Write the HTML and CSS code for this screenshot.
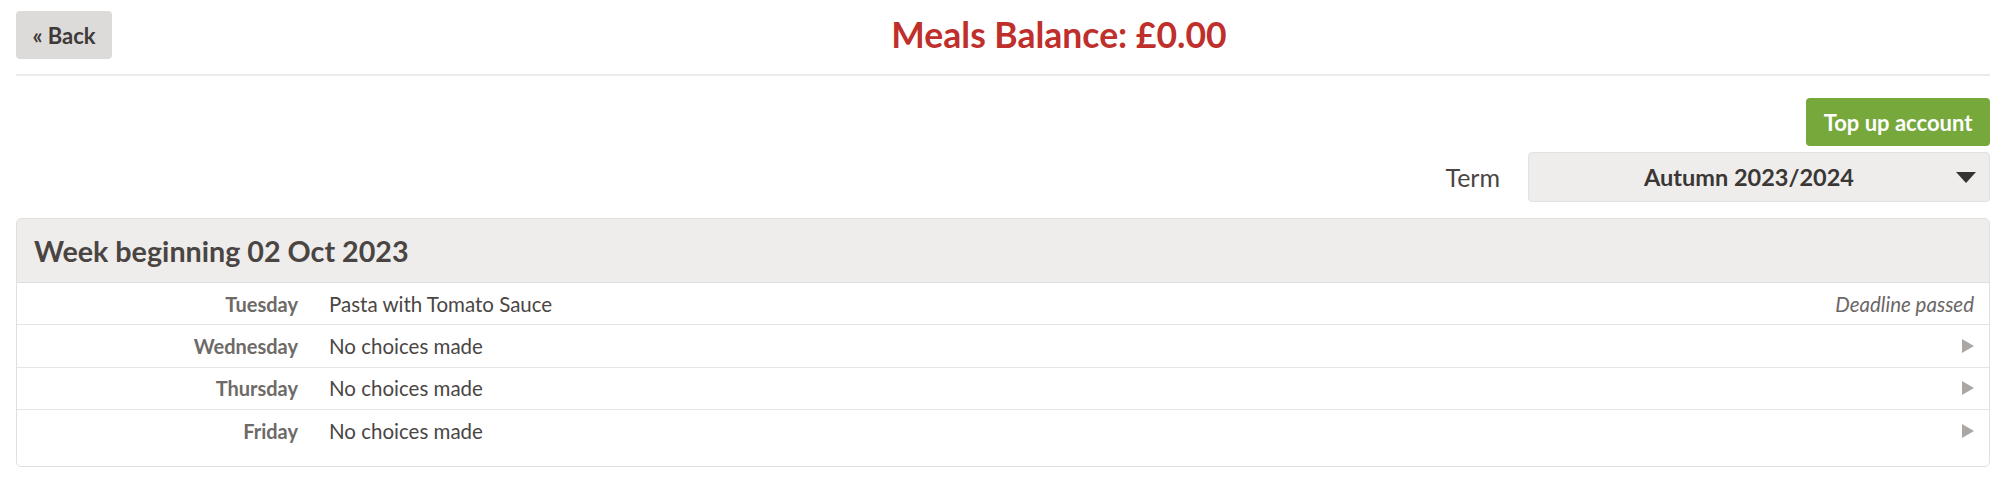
FILE: index.html
```html
<!DOCTYPE html>
<html lang="en">
<head>
<meta charset="utf-8">
<title>Meals Balance</title>
<link rel="stylesheet" href="styles.css">
</head>
<body>
<div class="page">
  <header class="topbar">
    <a class="btn btn-back" href="#">« Back</a>
    <h1 class="title">Meals Balance: £0.00</h1>
  </header>
  <hr class="divider">
  <div class="actions">
    <a class="btn btn-topup" href="#">Top up account</a>
    <div class="term-row">
      <label class="term-label">Term</label>
      <div class="select">
        <span class="select-value">Autumn 2023/2024</span>
        <svg class="select-arrow" width="20" height="11" viewBox="0 0 20 11"><polygon points="0,0 20,0 10,11" fill="#333"/></svg>
      </div>
    </div>
  </div>
  <section class="panel">
    <div class="panel-head">Week beginning 02 Oct 2023</div>
    <div class="panel-body">
      <div class="day-row">
        <span class="day">Tuesday</span>
        <span class="meal">Pasta with Tomato Sauce</span>
        <span class="status">Deadline passed</span>
      </div>
      <div class="day-row">
        <span class="day">Wednesday</span>
        <span class="meal">No choices made</span>
        <svg class="go" width="12" height="14" viewBox="0 0 12 14"><polygon points="0,0 12,7 0,14" fill="#aaa7a5"/></svg>
      </div>
      <div class="day-row">
        <span class="day">Thursday</span>
        <span class="meal">No choices made</span>
        <svg class="go" width="12" height="14" viewBox="0 0 12 14"><polygon points="0,0 12,7 0,14" fill="#aaa7a5"/></svg>
      </div>
      <div class="day-row">
        <span class="day">Friday</span>
        <span class="meal">No choices made</span>
        <svg class="go" width="12" height="14" viewBox="0 0 12 14"><polygon points="0,0 12,7 0,14" fill="#aaa7a5"/></svg>
      </div>
    </div>
  </section>
</div>
</body>
</html>
```

FILE: styles.css
```css
* { box-sizing: border-box; }
html, body { margin: 0; padding: 0; background: #fff; }
body {
  font-family: Lato, "Open Sans", "Liberation Sans", sans-serif;
  color: #4a4644;
}
.page { padding: 11px 12px 0 16px; }

.topbar { display: flex; align-items: center; height: 48px; }
.btn {
  display: inline-flex; align-items: center; justify-content: center;
  text-decoration: none; font-weight: 700; border-radius: 4px;
}
.btn-back {
  width: 96px; height: 48px; background: #dcdbda; color: #3d3a38;
  font-size: 22px;
}
.title {
  flex: 1; margin: 0; padding-left: 16px; text-align: center;
  color: #bf2f2b; font-size: 35.5px; font-weight: 700; line-height: 48px;
}
.divider { border: 0; border-top: 2px solid #ebebeb; margin: 15px 0 0; }

.actions { display: flex; flex-direction: column; align-items: flex-end; margin-top: 22px; }
.btn-topup {
  width: 184px; height: 48px; background: #76a83b; color: #fff; font-size: 22px;
}
.term-row { display: flex; align-items: center; margin-top: 6px; gap: 28px; }
.term-label { font-size: 25px; color: #4a4644; }
.select {
  width: 462px; height: 50px; background: #eeedec; border: 1px solid #e2e1df;
  border-radius: 4px; display: flex; align-items: center; padding: 0 13px 0 0;
}
.select-value { flex: 1; text-align: center; font-weight: 700; font-size: 23.5px; color: #3a3735; padding-left: 33px; }
.select-arrow { margin-left: 20px; }

.panel {
  margin-top: 16px; border: 1px solid #e0dfdd; border-radius: 5px; overflow: hidden;
  padding-bottom: 14px;
}
.panel-head {
  height: 64px; background: #eeedeb; border-bottom: 1px solid #e0dfdd;
  display: flex; align-items: center; padding-left: 17px;
  font-size: 28.7px; font-weight: 700; color: #4a4542;
}
.day-row {
  display: grid; grid-template-columns: 281px 1fr auto; column-gap: 31px;
  align-items: center; height: 42.3px; padding-right: 15px;
  border-bottom: 1px solid #e6e5e3;
}
.day-row:last-child { border-bottom: 0; }
.day { text-align: right; font-weight: 700; font-size: 20px; color: #6e6a67; }
.meal { font-size: 20.5px; color: #4a4644; }
.status { font-style: italic; font-size: 20.5px; color: #6b6766; }
.go { display: block; }
```
